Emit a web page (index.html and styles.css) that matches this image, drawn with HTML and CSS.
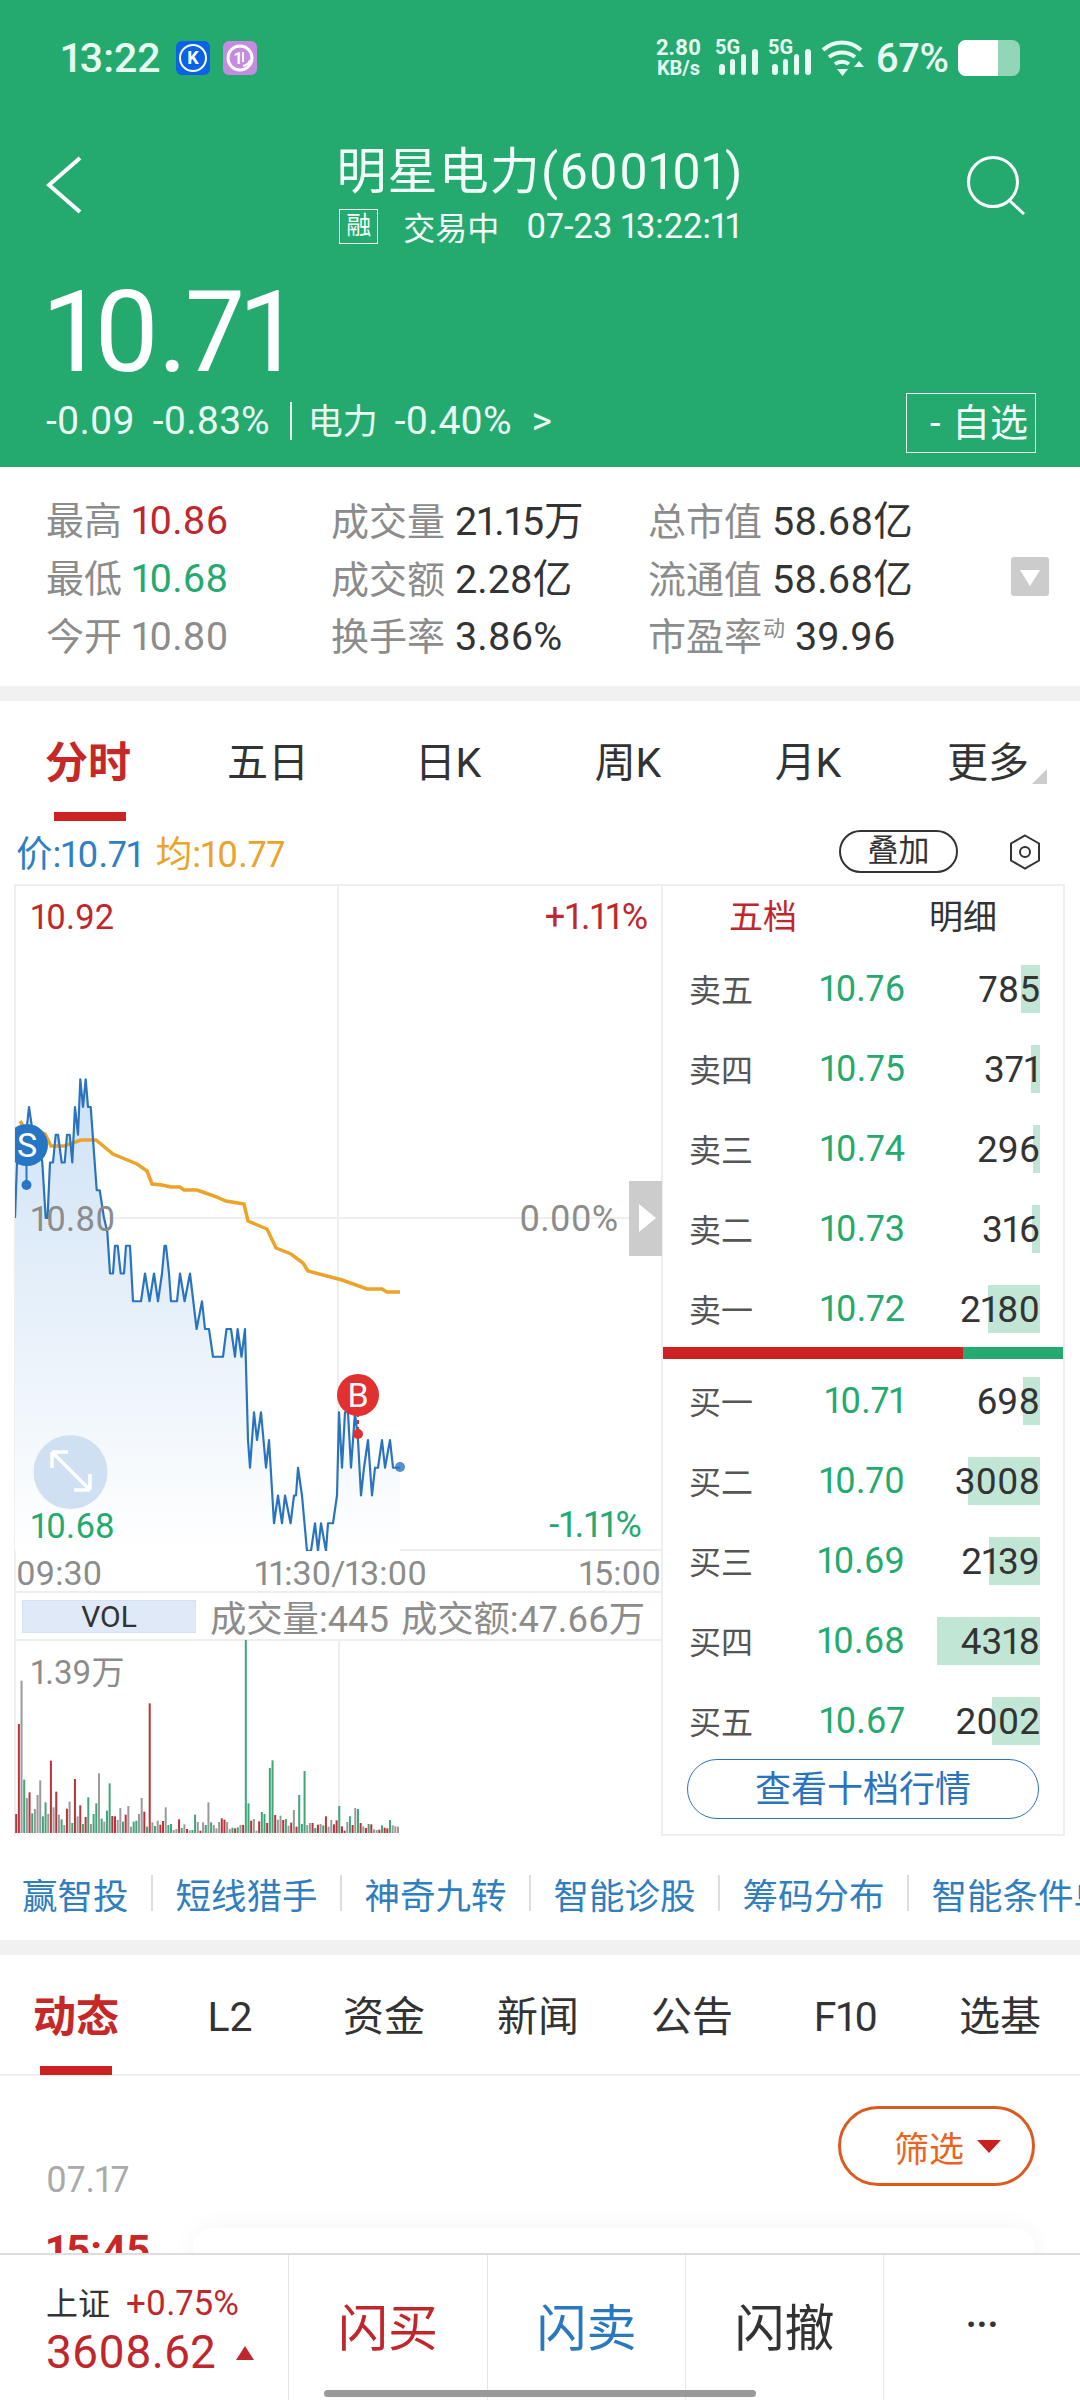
FILE: index.html
```html
<!DOCTYPE html>
<html lang="zh-CN">
<head>
    <meta charset="UTF-8">
    <meta name="viewport" content="width=device-width, initial-scale=1.0">
    <title>明星电力(600101)</title>
    <link rel="stylesheet" href="styles.css">
</head>
<body>

<!-- Green header -->
<div class="header">
    <div class="status">
        <span class="clock">13:22</span>
        <svg class="app-icon" viewBox="0 0 34 34">
            <rect width="34" height="34" rx="6" fill="#0a62e6"/>
            <circle cx="17" cy="17" r="13" fill="none" stroke="#fff" stroke-width="2"/>
            <text x="17" y="23" text-anchor="middle" class="icon-k">K</text>
        </svg>
        <svg class="app-icon purple" viewBox="0 0 34 34">
            <rect width="34" height="34" rx="6" fill="#c48be0"/>
            <circle cx="17" cy="17" r="12" fill="none" stroke="#fff" stroke-width="3"/>
            <text x="15" y="23" text-anchor="middle" class="icon-one">1</text>
            <path d="M20 11v10M20 25c4-1 6-3 7-6" fill="none" stroke="#fff" stroke-width="2"/>
        </svg>
        <div class="status-right">
            <div class="net-speed"><span>2.80</span><span>KB/s</span></div>
            <svg class="signal" viewBox="0 -4 44 42">
                <text x="0" y="15" class="five-g">5G</text>
                <rect x="4" y="25" width="6" height="11" rx="3"/>
                <rect x="15" y="20" width="5" height="16" rx="2.5"/>
                <rect x="26" y="15" width="5" height="21" rx="2.5"/>
                <rect x="37" y="10" width="6" height="26" rx="3"/>
            </svg>
            <svg class="signal" viewBox="0 -4 44 42">
                <text x="0" y="15" class="five-g">5G</text>
                <rect x="4" y="25" width="6" height="11" rx="3"/>
                <rect x="15" y="20" width="5" height="16" rx="2.5"/>
                <rect x="26" y="15" width="5" height="21" rx="2.5"/>
                <rect x="37" y="10" width="6" height="26" rx="3"/>
            </svg>
            <svg class="wifi" viewBox="0 0 44 36">
                <path d="M2 10C13 0 29 0 40 10M8 17c8-6 18-6 26 0M14 24c4-3 10-3 14 0" fill="none" stroke="#e8fbf3" stroke-width="4"/>
                <path d="M16 29h11l-5.500 7zM33 27l5-6 5 6z" fill="#e8fbf3"/>
            </svg>
            <span class="battery-pct">67%</span>
            <div class="battery"><div class="battery-fill"></div></div>
        </div>
    </div>

    <div class="nav">
        <svg class="back" viewBox="0 0 36 58"><path d="M34 2 3 29l31 27" fill="none" stroke="#fff" stroke-width="4"/></svg>
        <div class="nav-title">
            <div class="title">明星电力(600101)</div>
            <div class="subtitle"><span class="rong">融</span><span class="trading">交易中</span><span class="stamp">07-23 13:22:11</span></div>
        </div>
        <svg class="search" viewBox="0 0 62 62"><circle cx="27" cy="27" r="24.500" fill="none" stroke="#fff" stroke-width="3"/><path d="M44 46l14 13" fill="none" stroke="#fff" stroke-width="3"/></svg>
    </div>

    <div class="price">10.71</div>
    <div class="price-row">
        <div class="change">
            <span>-0.09</span><span>-0.83%</span><span class="pipe"></span><span class="cn">电力</span><span>-0.40%</span><span class="more">&gt;</span>
        </div>
        <div class="watch">- 自选</div>
    </div>
</div>

<!-- Quote stats -->
<div class="stats">
    <div class="stat-grid">
        <div><span class="label">最高</span><span class="red">10.86</span></div>
        <div><span class="label">成交量</span>21.15万</div>
        <div><span class="label">总市值</span>58.68亿</div>
        <div><span class="label">最低</span><span class="green">10.68</span></div>
        <div><span class="label">成交额</span>2.28亿</div>
        <div><span class="label">流通值</span>58.68亿</div>
        <div><span class="label">今开</span><span class="gray">10.80</span></div>
        <div><span class="label">换手率</span>3.86%</div>
        <div><span class="label">市盈率<sup>动</sup></span>39.96</div>
    </div>
    <div class="expand-toggle"></div>
</div>

<div class="gap"></div>

<!-- Period tabs -->
<div class="period-tabs">
    <div class="active">分时</div>
    <div>五日</div>
    <div>日K</div>
    <div>周K</div>
    <div>月K</div>
    <div class="has-more">更多</div>
</div>

<div class="legend">
    <span class="blue">价:10.71</span>
    <span class="orange">均:10.77</span>
    <span class="overlay-btn">叠加</span>
    <svg class="hex" viewBox="0 0 32 36"><path d="M16 1.500 30 9.500v17L16 34.500 2 26.500v-17z" fill="none" stroke="#333" stroke-width="2"/><circle cx="16" cy="18" r="5" fill="none" stroke="#333" stroke-width="2"/></svg>
</div>

<!-- Chart and order book -->
<div class="chart-section">
    <div class="chart-col">
        <div class="price-chart">
            <span class="tag tl red">10.92</span>
            <span class="tag tr red">+1.11%</span>
            <span class="tag ml gray">10.80</span>
            <span class="tag mr gray">0.00%</span>
            <span class="tag bl green">10.68</span>
            <span class="tag br green">-1.11%</span>
            <svg id="priceSvg" viewBox="15 884 648 666">
                <defs>
                    <linearGradient id="areaFill" gradientUnits="userSpaceOnUse" x1="0" y1="1078" x2="0" y2="1550">
                        <stop offset="0" stop-color="#cfe2f5"/>
                        <stop offset="1" stop-color="#ffffff"/>
                    </linearGradient>
                </defs>
                <path d="M338 884V1550M15 1217H630" stroke="#eee" stroke-width="2" fill="none"/>
                <path id="priceArea" fill="url(#areaFill)"/>
                <circle cx="70.500" cy="1471" r="37" fill="#cfe0f2"/>
                <path d="M52 1451l38 38M52 1451h16M52 1451v16M90 1489h-16M90 1489v-16" stroke="#fff" stroke-width="3.500" fill="none"/>
                <polyline id="avgLine" fill="none" stroke="#eba32a" stroke-width="3.500"/>
                <polyline id="priceLine" fill="none" stroke="#2a74bf" stroke-width="2.200" stroke-linejoin="round"/>
                <circle cx="400" cy="1466" r="5" fill="#2a74bf" fill-opacity=".8"/>
                <path d="M26.500 1160V1184" stroke="#2776c6" stroke-width="2"/>
                <circle cx="26.500" cy="1184" r="5" fill="#2776c6"/>
                <circle cx="27" cy="1144" r="21" fill="#2776c6"/>
                <text x="27" y="1156" text-anchor="middle" class="marker">S</text>
                <path d="M358 1412V1433" stroke="#e03030" stroke-width="2" stroke-dasharray="4 3"/>
                <circle cx="358" cy="1433" r="5" fill="#e03030"/>
                <circle cx="358" cy="1394" r="21" fill="#e03030"/>
                <text x="358" y="1406" text-anchor="middle" class="marker">B</text>
            </svg>
            <div class="collapse-tab"></div>
        </div>
        <div class="time-axis"><span>09:30</span><span>11:30/13:00</span><span>15:00</span></div>
        <div class="vol-head">
            <span class="vol-box">VOL</span>
            <span class="vol-text">成交量:445 成交额:47.66万</span>
        </div>
        <div class="vol-chart">
            <span class="vol-max">1.39万</span>
            <svg id="volSvg" viewBox="14 1640 649 195"></svg>
        </div>
    </div>

    <div class="depth">
        <div class="depth-tabs"><span class="red">五档</span><span>明细</span></div>
        <div class="depth-row"><span>卖五</span><span class="green">10.76</span><span class="qty"><i style="width:19px"></i><b>785</b></span></div>
        <div class="depth-row"><span>卖四</span><span class="green">10.75</span><span class="qty"><i style="width:9px"></i><b>371</b></span></div>
        <div class="depth-row"><span>卖三</span><span class="green">10.74</span><span class="qty"><i style="width:7px"></i><b>296</b></span></div>
        <div class="depth-row"><span>卖二</span><span class="green">10.73</span><span class="qty"><i style="width:8px"></i><b>316</b></span></div>
        <div class="depth-row"><span>卖一</span><span class="green">10.72</span><span class="qty"><i style="width:52px"></i><b>2180</b></span></div>
        <div class="split"><div class="split-red"></div></div>
        <div class="depth-row"><span>买一</span><span class="green">10.71</span><span class="qty"><i style="width:17px"></i><b>698</b></span></div>
        <div class="depth-row"><span>买二</span><span class="green">10.70</span><span class="qty"><i style="width:72px"></i><b>3008</b></span></div>
        <div class="depth-row"><span>买三</span><span class="green">10.69</span><span class="qty"><i style="width:51px"></i><b>2139</b></span></div>
        <div class="depth-row"><span>买四</span><span class="green">10.68</span><span class="qty"><i style="width:103px"></i><b>4318</b></span></div>
        <div class="depth-row"><span>买五</span><span class="green">10.67</span><span class="qty"><i style="width:48px"></i><b>2002</b></span></div>
        <div class="ten-btn">查看十档行情</div>
    </div>
</div>

<!-- Tool links -->
<div class="links">
    <span>赢智投</span><i></i><span>短线猎手</span><i></i><span>神奇九转</span><i></i><span>智能诊股</span><i></i><span>筹码分布</span><i></i><span>智能条件单</span>
</div>

<div class="gap"></div>

<!-- Info tabs -->
<div class="info-tabs">
    <div class="active">动态</div>
    <div>L2</div>
    <div>资金</div>
    <div>新闻</div>
    <div>公告</div>
    <div>F10</div>
    <div>选基</div>
</div>

<div class="feed">
    <div class="feed-top">
        <span class="date">07.17</span>
        <div class="filter">筛选<span class="filter-arrow"></span></div>
    </div>
    <div class="feed-item">
        <span class="feed-time">15:45</span>
        <div class="feed-card"></div>
    </div>
</div>

<!-- Bottom trade bar -->
<div class="bottom-bar">
    <div class="index-cell">
        <div class="index-top"><span>上证</span><span class="red">+0.75%</span></div>
        <div class="index-val red">3608.62<span class="up-arrow"></span></div>
    </div>
    <div class="trade red">闪买</div>
    <div class="trade blue-dark">闪卖</div>
    <div class="trade">闪撤</div>
    <div class="trade dots">···</div>
    <div class="home-bar"></div>
</div>

<script src="chart.js"></script>
</body>
</html>
```

FILE: styles.css
```css
* {
    box-sizing: border-box;
}
html, body {
    margin: 0;
    padding: 0;
}
body {
    position: relative;
    width: 1080px;
    height: 2400px;
    overflow: hidden;
    background: #fff;
    font-family: Roboto, "Noto Sans CJK SC", sans-serif;
    font-variant-numeric: proportional-nums;
    color: #333;
}
.red { color: #c0272d; }
.green { color: #24aa6f; }
.gray { color: #8c8c8c; }
.blue { color: #2f7fc4; }
.orange { color: #eba32a; }

/* header */
.header {
    height: 467px;
    background: #24aa6f;
    color: #fff;
}
.status {
    display: flex;
    align-items: center;
    height: 116px;
    padding: 0 60px 0 61px;
    color: #e8fbf3;
}
.clock {
    font-size: 41px;
    font-weight: 500;
    width: 115px;
}
.app-icon {
    width: 34px;
    height: 34px;
    margin-right: 13px;
}
.icon-k {
    font: bold 18px Roboto, sans-serif;
    fill: #fff;
}
.icon-one {
    font: bold 16px Roboto, sans-serif;
    fill: #fff;
}
.status-right {
    display: flex;
    align-items: center;
    margin-left: auto;
}
.net-speed {
    display: flex;
    flex-direction: column;
    align-items: center;
    width: 50px;
    margin-right: 12px;
    font-size: 22px;
    font-weight: 700;
    line-height: 21px;
}
.net-speed span:last-child {
    font-size: 20px;
}
.signal {
    width: 44px;
    height: 42px;
    margin: 0 9px 4px 0;
    fill: #e8fbf3;
}
.five-g {
    font: bold 20px Roboto, sans-serif;
}
.wifi {
    width: 44px;
    height: 36px;
}
.battery-pct {
    font-size: 40px;
    font-weight: 500;
    margin-left: 10px;
    margin-right: 9px;
}
.battery {
    width: 62px;
    height: 36px;
    border-radius: 8px;
    background: #93d5b8;
    overflow: hidden;
}
.battery-fill {
    width: 40px;
    height: 36px;
    background: #fff;
}
.nav {
    display: grid;
    grid-template-columns: 1fr auto 1fr;
    height: 157px;
    padding: 26px 46px 0 46px;
}
.back {
    width: 36px;
    height: 58px;
    margin-top: 14px;
}
.nav-title {
    text-align: center;
}
.title {
    font-size: 50px;
    line-height: 60px;
    letter-spacing: 1.100px;
    color: #f4fffa;
}
.subtitle {
    display: flex;
    align-items: center;
    justify-content: center;
    height: 34px;
    margin-top: 7px;
    font-size: 32px;
    color: #f4fffa;
}
.stamp {
    font-size: 34.500px;
}
.rong {
    width: 39px;
    height: 35px;
    margin-right: 25px;
    border: 1px solid #f4fffa;
    font-size: 25px;
    line-height: 32px;
    text-align: center;
}
.trading {
    margin-right: 27px;
}
.search {
    justify-self: end;
    width: 62px;
    height: 62px;
    margin: 13px 6px 0 0;
}
.price {
    height: 118px;
    margin-left: 46px;
    font-size: 114px;
    line-height: 118px;
    letter-spacing: -2px;
    color: #fff;
}
.price-row {
    display: flex;
    justify-content: space-between;
    padding: 0 44px 0 46px;
}
.change {
    display: flex;
    align-items: center;
    height: 60px;
    font-size: 39px;
    color: #eafbf3;
}
.change span {
    margin-right: 18px;
}
.change .pipe {
    width: 2px;
    height: 38px;
    margin: 0 16px 0 2px;
    background: #eafbf3;
}
.change .cn {
    margin: -5px 17px 0 0;
    font-size: 35px;
}
.change .more {
    margin-left: 2px;
}
.watch {
    width: 130px;
    height: 60px;
    margin-top: 2px;
    padding-right: 7px;
    border: 1px solid #eafbf3;
    font-size: 38px;
    line-height: 58px;
    word-spacing: 2px;
    text-align: right;
    color: #f4fffa;
}

/* stats */
.stats {
    display: flex;
    align-items: center;
    height: 219px;
    padding: 0 31px 0 46px;
}
.stat-grid {
    display: grid;
    grid-template-columns: 285px 317px 320px;
    grid-auto-rows: 58px;
    align-items: center;
    font-size: 39.500px;
    white-space: nowrap;
    margin-top: -3px;
}
.label {
    font-size: 38px;
    color: #8c8c8c;
    margin-right: 10px;
}
.label sup {
    font-size: 22px;
    line-height: 0;
    margin-left: 1px;
}
.expand-toggle {
    position: relative;
    width: 38px;
    height: 39px;
    margin-left: auto;
    border-radius: 3px;
    background: #ccc;
}
.expand-toggle::after {
    content: "";
    position: absolute;
    left: 9px;
    top: 13px;
    border-left: 10px solid transparent;
    border-right: 10px solid transparent;
    border-top: 16px solid #fff;
}
.gap {
    height: 15px;
    background: #f1f1f1;
}

/* period tabs */
.period-tabs {
    display: grid;
    grid-template-columns: repeat(6, 180px);
    height: 120px;
    margin-left: -2px;
    padding-top: 33px;
    font-size: 41px;
    line-height: 58px;
    text-align: center;
}
.period-tabs .active, .info-tabs .active {
    position: relative;
    color: #c62828;
    font-size: 43px;
    font-weight: 700;
}
.period-tabs .active::after {
    content: "";
    position: absolute;
    left: 56px;
    top: 78px;
    width: 72px;
    height: 9px;
    background: #cc2222;
}
.has-more {
    position: relative;
}
.has-more::after {
    content: "";
    position: absolute;
    right: 31px;
    top: 35px;
    border-left: 15px solid transparent;
    border-bottom: 15px solid #ccc;
}
.legend {
    display: flex;
    align-items: center;
    height: 63px;
    margin-top: -1px;
    padding: 0 39px 0 16px;
    font-size: 36.500px;
}
.legend .orange {
    margin-left: 13px;
}
.overlay-btn {
    width: 119px;
    height: 43px;
    margin-left: auto;
    border: 2px solid #333;
    border-radius: 22px;
    font-size: 31px;
    line-height: 38px;
    text-align: center;
}
.hex {
    width: 32px;
    height: 36px;
    margin-left: 51px;
}

/* chart */
.chart-section {
    display: flex;
    height: 952px;
    margin-left: 14px;
    margin-top: 1px;
}
.chart-col {
    width: 649px;
    border-left: 2px solid #eee;
    border-top: 2px solid #eee;
    border-right: 2px solid #eee;
}
.price-chart {
    position: relative;
    height: 665px;
    border-bottom: 2px solid #eee;
    font-size: 34.500px;
}
.price-chart svg {
    position: absolute;
    left: -1px;
    top: -1px;
    width: 648px;
    height: 666px;
}
.tag {
    position: absolute;
    z-index: 1;
    line-height: 40px;
}
.tr, .mr, .br {
    font-size: 36px;
}
.tl { left: 15px; top: 11px; }
.tr { right: 13px; top: 11px; }
.ml { left: 15px; top: 313px; }
.mr { right: 43px; top: 313px; }
.bl { left: 15px; top: 620px; }
.br { right: 19px; top: 619px; }
.marker {
    font: 34px Roboto, sans-serif;
    fill: #fff;
}
.collapse-tab {
    position: absolute;
    right: -1px;
    top: 295px;
    width: 33px;
    height: 75px;
    background: #ccc;
}
.collapse-tab::after {
    content: "";
    position: absolute;
    left: 10px;
    top: 23px;
    border-top: 14px solid transparent;
    border-bottom: 14px solid transparent;
    border-left: 17px solid #fff;
}
.time-axis {
    display: flex;
    justify-content: space-between;
    height: 42px;
    font-size: 34px;
    line-height: 44px;
    color: #8c8c8c;
    border-bottom: 2px solid #eee;
}
.vol-head {
    display: flex;
    align-items: center;
    height: 48px;
    padding-left: 6px;
    border-bottom: 2px solid #eee;
}
.vol-box {
    flex: none;
    width: 174px;
    height: 33px;
    background: #dfe9f8;
    border: 1px solid #d5e2f5;
    font-size: 30px;
    line-height: 32px;
    text-align: center;
    margin-right: 14px;
}
.vol-text {
    font-size: 36.300px;
    word-spacing: 3px;
    color: #8c8c8c;
    white-space: nowrap;
}
.vol-chart {
    position: relative;
    height: 195px;
}
.vol-chart svg {
    position: absolute;
    left: -2px;
    top: -2px;
    width: 649px;
    height: 195px;
}
.vol-max {
    position: absolute;
    left: 15px;
    top: 12px;
    font-size: 33px;
    line-height: 40px;
    color: #8c8c8c;
}
.depth {
    width: 402px;
    height: 952px;
    border: 2px solid #eee;
    border-left: 0;
}
.depth-tabs {
    display: grid;
    grid-template-columns: 200px 200px;
    height: 63px;
    font-size: 34px;
    line-height: 62px;
    text-align: center;
}
.depth-row {
    display: grid;
    grid-template-columns: 120px 96px 135px;
    align-items: center;
    height: 80px;
    padding-left: 26px;
    font-size: 37px;
}
.depth-row span:first-child {
    margin-top: -3px;
    font-size: 32px;
    color: #555;
}
.depth-row .green {
    text-align: right;
    font-size: 36px;
}
.qty {
    position: relative;
    text-align: right;
}
.qty i {
    position: absolute;
    right: 0;
    top: -3px;
    height: 48px;
    background: #c2e6d5;
}
.qty b {
    position: relative;
    font-weight: 400;
}
.split {
    height: 12px;
    margin: -2px 0 2px;
    background: #24aa6f;
}
.split-red {
    width: 300px;
    height: 12px;
    background: #cc2222;
}
.ten-btn {
    width: 352px;
    height: 60px;
    margin: -2px 0 0 24px;
    border: 1px solid #2a74bf;
    border-radius: 30px;
    font-size: 36px;
    line-height: 60px;
    text-align: center;
    color: #2a74bf;
}

/* links */
.links {
    display: flex;
    align-items: center;
    gap: 22.500px;
    height: 104px;
    padding: 10px 0 0 22px;
    font-size: 35.500px;
    color: #2f7fc0;
    white-space: nowrap;
}
.links i {
    flex: none;
    width: 2px;
    height: 36px;
    background: #ddd;
}

/* info tabs */
.info-tabs {
    display: grid;
    grid-template-columns: repeat(7, 154px);
    height: 121px;
    margin-left: -1px;
    padding-top: 33px;
    border-bottom: 2px solid #eee;
    font-size: 41px;
    line-height: 58px;
    text-align: center;
}
.info-tabs .active::after {
    content: "";
    position: absolute;
    left: 41px;
    top: 78px;
    width: 72px;
    height: 9px;
    background: #cc2222;
}
.feed {
    padding: 30px 45px 0 46px;
}
.feed-top {
    display: flex;
    justify-content: space-between;
}
.date {
    margin-top: 54px;
    font-size: 36px;
    line-height: 40px;
    color: #aaa;
}
.filter {
    display: flex;
    align-items: center;
    width: 197px;
    height: 80px;
    padding-left: 53px;
    border: 3px solid #dd5a1e;
    border-radius: 40px;
    font-size: 35px;
    color: #e8651f;
}
.filter-arrow {
    margin-left: 13px;
    border-left: 12px solid transparent;
    border-right: 12px solid transparent;
    border-top: 13px solid #c9211e;
}
.feed-item {
    display: flex;
    margin-top: 23px;
}
.feed-time {
    font-size: 42px;
    font-weight: 700;
    line-height: 56px;
    color: #c62828;
}
.feed-card {
    flex: 1;
    height: 120px;
    margin: 5px 0 0 43px;
    border-radius: 20px;
    box-shadow: 0 0 24px rgba(0, 0, 0, .05);
}

/* bottom bar */
.bottom-bar {
    position: absolute;
    left: 0;
    right: 0;
    bottom: 0;
    display: grid;
    grid-template-columns: 288px 199px 198px 198px 197px;
    height: 147px;
    background: #fff;
    border-top: 2px solid #ddd;
}
.index-cell {
    padding: 26px 0 0 46px;
}
.index-top {
    display: flex;
    gap: 16px;
    font-size: 32px;
    line-height: 46px;
}
.index-top .red {
    font-size: 35px;
}
.index-val {
    font-size: 46px;
    line-height: 50px;
}
.up-arrow {
    display: inline-block;
    margin-left: 20px;
    vertical-align: 8px;
    border-left: 9px solid transparent;
    border-right: 9px solid transparent;
    border-bottom: 14px solid #c0272d;
}
.trade {
    border-left: 1px solid #e6e6e6;
    font-size: 50px;
    line-height: 148px;
    text-align: center;
}
.blue-dark {
    color: #2a78bd;
}
.dots {
    font-size: 36px;
    line-height: 140px;
    font-weight: 700;
}
.home-bar {
    position: absolute;
    left: 324px;
    bottom: 3px;
    width: 432px;
    height: 7px;
    border-radius: 4px;
    background: #999;
}
```

FILE: chart.js
```js
// intraday price as [x, price in cents]
const pricePoints = [
    [15, 1080], [17, 1082], [20, 1083], [23, 1082], [29, 1084], [33, 1083], [38, 1083], [42.3, 1082], [45.7, 1080], [47.5, 1080],
    [50, 1082], [53, 1082], [55.7, 1083], [58, 1083], [61.7, 1082], [64.7, 1082], [67, 1083], [69.7, 1083], [72.3, 1082], [75, 1084],
    [78, 1083], [80.3, 1085], [83, 1084], [85.7, 1085], [88, 1084], [90.7, 1084], [96.7, 1081], [99.7, 1081], [104, 1080], [107.3, 1079.5],
    [110, 1078], [113, 1078], [115, 1079], [117.7, 1079], [120.7, 1078], [124, 1078], [126, 1079], [130, 1079], [133, 1077], [137, 1077],
    [141, 1077], [145, 1078], [149.5, 1077], [154, 1078], [158, 1077], [162, 1078], [164.5, 1079], [166, 1079], [169, 1078], [171, 1077],
    [177, 1077], [180, 1078], [184.6, 1077], [190, 1078], [196.6, 1076], [202, 1077], [205, 1076], [209, 1076], [213, 1075], [223, 1075],
    [226.5, 1076], [231, 1076], [235, 1075], [237.6, 1076], [241.5, 1075], [245, 1076], [248, 1072], [250, 1071], [254, 1073], [257, 1072],
    [261, 1073], [266, 1071], [269, 1072], [274, 1069], [278, 1070], [282, 1069], [285, 1070], [290.6, 1069], [294, 1070], [296, 1070],
    [298, 1071], [302, 1070], [307, 1068], [311, 1068], [315, 1069], [318, 1068], [321, 1069], [326, 1068], [328, 1069], [333, 1069],
    [337, 1070], [339, 1073], [342, 1071], [345, 1073], [348, 1073], [351, 1071], [355, 1073], [358, 1072], [361, 1070], [364, 1071],
    [368, 1072], [372, 1070], [375, 1071], [378, 1071], [382, 1072], [385, 1071], [390, 1072], [393, 1071], [400, 1071]
];

// average price as [x, page y]
const avgPoints = [
    [20, 1120], [23, 1125], [45, 1133], [51, 1145], [64, 1145], [81, 1139], [96, 1139], [113, 1153], [137, 1163], [147, 1170],
    [152, 1183], [162, 1184], [171, 1186], [180, 1186], [184, 1189], [197, 1189], [214, 1195], [226, 1200], [244, 1203], [248, 1220],
    [267, 1228], [276, 1247], [291, 1253], [303, 1262], [308, 1270], [342, 1279], [367, 1288], [382, 1288], [387, 1291], [400, 1291]
];

// volume bars: top of each bar as read off the axis, k=gray r=red g=green
const volumes = ('525r 255r 125k 422g 477k 460r 523g 510k 468k 424k 532g 490g 525k 365r 505k 458r 527k 541g 558k 509r ' +
    '488k 552g 420r 532k 499r 555g 534r 475g 555k 525g 493g 403k 539g 548k 515g 433g 531r 532r 543k 507k ' +
    '548g 527r 501k 563k 548g 545g 525k 477k 518r 563g 193r 550k 561g 545k 557r 546r 505k 558g 555g 573k ' +
    '570k 541r 567g 556k 570r 574k 573g 527g 549k 575r 550k 558g 490k 550g 558k 568k 549k 538r 542r 549k ' +
    '570k 566g 568r 565g 558k 558r 3g 493g 545r 540k 575k 547r 519g 525g 552r 387g 364g 528r 542k 530k ' +
    '543r 540g 560k 551r 513k 563r 468g 555g 396g 558k 552k 552r 567g 557r 555k 559g 532r 563k 543k 556r ' +
    '544r 501g 562r 575r 549k 532g 558r 507k 510g 552r 562k 567r 555g 556r 571k 573k 572r 559g 566r 568r ' +
    '543g 559k 562k 563k').split(' ');

const barColors = { k: '#9a9a9a', r: '#b8333a', g: '#3fa67a' };

function priceY(cents) {
    return 1217 - (cents - 1080) * 27.75;
}

const priceCoords = pricePoints.map(p => p[0] + ',' + priceY(p[1]));
document.getElementById('priceLine').setAttribute('points', priceCoords.join(' '));
document.getElementById('priceArea').setAttribute('d', 'M15,1550L' + priceCoords.join('L') + 'L400,1550Z');
document.getElementById('avgLine').setAttribute('points', avgPoints.map(p => p.join(',')).join(' '));

let bars = '<path d="M339 1640V1835" stroke="#eee" stroke-width="2"/>';
volumes.forEach((v, i) => {
    const top = parseInt(v) / 3 + 1640;
    const color = barColors[v.slice(-1)];
    const x = 15.2 + i * 2.67;
    bars += `<rect x="${x}" y="${top}" width="2" height="${1834 - top}" fill="${color}"/>`;
});
document.getElementById('volSvg').innerHTML = bars;
```
